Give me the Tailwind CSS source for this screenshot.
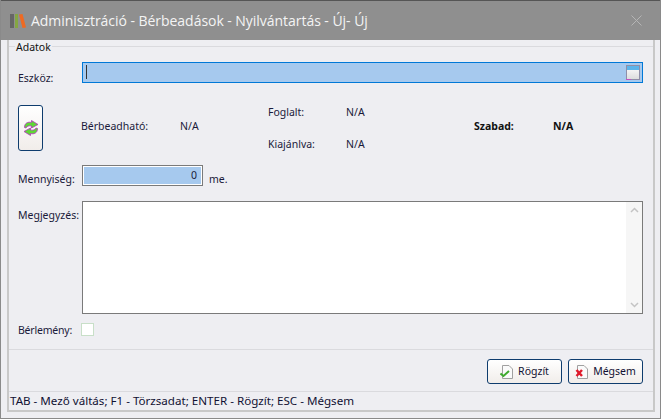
<!DOCTYPE html>
<html lang="hu">
<head>
    <meta charset="UTF-8">
    <title>Adminisztráció - Bérbeadások</title>
    <script src="https://cdn.jsdelivr.net/npm/@tailwindcss/browser@4"></script>
</head>
<body class="bg-[#eeeef2]">
    <div class="w-[661px] h-[419px] flex flex-col overflow-hidden bg-[#eeeef2] text-[#1a1a3a] text-[10.5px] font-['Noto_Sans',sans-serif] border-x border-b border-[#8a8a8a]">
        <!-- Title bar -->
        <header class="h-10 shrink-0 -mx-px bg-[#8f8f8f] border-t border-[#555555] flex items-center pl-[10px] pr-[19px]">
            <svg width="16" height="16" viewBox="0 0 16 16" class="mr-[5px]">
                <rect x="0" y="1" width="4" height="14" fill="#666666"/>
                <rect x="5" y="1" width="3" height="14" fill="#84a642"/>
                <path d="M9 1.500 L12.500 1 L16 14.500 L12.500 15 Z" fill="#ee6a22"/>
            </svg>
            <h1 class="text-[14px] tracking-[-0.04px] text-[#f4f4f4] font-['Open_Sans',sans-serif] whitespace-pre">Adminisztráció - Bérbeadások - Nyilvántartás - Új- Új</h1>
            <svg width="11" height="11" viewBox="0 0 11 11" class="ml-auto stroke-[#b5b5b5]" fill="none"><path d="M0.500 0.500 L10.500 10.500 M10.500 0.500 L0.500 10.500"/></svg>
        </header>

        <div class="flex-1 flex flex-col ml-[6px] mr-[5px] mb-[6px] border-x-2 border-b-2 border-[#c8c8c8]">
            <!-- Adatok group -->
            <section class="relative h-[304px] mt-[6px] border-t border-b border-[#dadade] pt-[15px] pl-[9px] pr-[10px]">
                <span class="absolute left-[6px] top-[-7px] bg-[#eeeef2] px-px text-[#111111] leading-[14px]">Adatok</span>

                <div class="flex items-center h-[20px]">
                    <label class="w-[64px] pt-[14px]">Eszköz:</label>
                    <div class="flex-1 h-[21px] bg-[#a6c9ee] border border-[#0078d7] flex items-center justify-between pl-[3px] pr-[2px]">
                        <span class="w-px h-[14px] bg-[#333333]"></span>
                        <svg width="14" height="15" viewBox="0 0 14 15">
                            <defs><linearGradient id="calBody" x1="0" y1="0" x2="0" y2="1"><stop offset="0" stop-color="#ffffff"/><stop offset="1" stop-color="#dcdcdc"/></linearGradient></defs>
                            <rect x="0.500" y="0.500" width="13" height="14" fill="url(#calBody)" stroke="#8f8fa8"/>
                            <rect x="1" y="1" width="12" height="4" fill="#5cb4ea"/>
                            <path d="M0 14.500 H5" stroke="#c24fc4"/>
                        </svg>
                    </div>
                </div>

                <div class="flex mt-[23px] h-[46px]">
                    <button class="w-[25px] h-[46px] rounded-[3px] border border-[#0e3c6e] bg-gradient-to-b from-[#ffffff] to-[#f1edea] flex items-center justify-center">
                        <svg width="16" height="16" viewBox="0 0 16 16">
                            <path d="M1.500 7.500 C1.500 3 5 1.500 8.500 2.500 L8.500 0.500 L15 4.500 L8.500 8 L8.500 6 C6 5.500 4 6 3 8 Z" fill="#5fd636" stroke="#b52fc0" stroke-width="0.800"/>
                            <path d="M14.500 8.500 C14.500 13 11 14.500 7.500 13.500 L7.500 15.500 L1 11.500 L7.500 8 L7.500 10 C10 10.500 12 10 13 8 Z" fill="#5fd636" stroke="#b52fc0" stroke-width="0.800"/>
                        </svg>
                    </button>
                    <div class="w-[38px]"></div>
                    <div class="flex items-center w-[99px] pb-[3px]">Bérbeadható:</div>
                    <div class="flex items-center w-[88px] pb-[3px]">N/A</div>
                    <div class="flex flex-col w-[78px] gap-[16px]">
                        <span>Foglalt:</span>
                        <span>Kiajánlva:</span>
                    </div>
                    <div class="flex flex-col w-[128px] gap-[16px]">
                        <span>N/A</span>
                        <span>N/A</span>
                    </div>
                    <div class="flex items-center w-[79px] pb-[3px] font-bold text-[#111111]">Szabad:</div>
                    <div class="flex items-center pb-[3px] font-bold text-[#111111]">N/A</div>
                </div>

                <div class="flex items-center mt-[14px] h-[21px]">
                    <label class="w-[64px] pt-[8px]">Mennyiség:</label>
                    <div class="w-[121px] h-[21px] bg-[#a6c9ee] border border-[#7a7a7a] ring-1 ring-inset ring-white flex items-center justify-end pr-[5px]">0</div>
                    <span class="ml-[6px] pt-[8px]">me.</span>
                </div>

                <div class="flex mt-[15px]">
                    <label class="w-[64px] pt-[7px]">Megjegyzés:</label>
                    <div class="flex-1 h-[113px] bg-white border border-[#7a7a7a] flex justify-end">
                        <div class="w-[16px] flex flex-col justify-between items-center py-[5px] bg-[#f6f6f6]">
                            <svg width="9" height="6" viewBox="0 0 9 6" fill="none" stroke="#c4c4c4" stroke-width="1.500"><path d="M1 5 L4.500 1.500 L8 5"/></svg>
                            <svg width="9" height="6" viewBox="0 0 9 6" fill="none" stroke="#c4c4c4" stroke-width="1.500"><path d="M1 1 L4.500 4.500 L8 1"/></svg>
                        </div>
                    </div>
                </div>

                <div class="flex items-center mt-[6px]">
                    <label class="w-[63px] pt-[3px] tracking-[-0.2px]">Bérlemény:</label>
                    <span class="w-[13px] h-[13px] bg-white border border-[#c8dfc8]"></span>
                </div>
            </section>

            <!-- Buttons -->
            <div class="flex-1 flex justify-end items-start gap-[6px] pt-[9px] pr-[10px] text-[#111133]">
                <button class="w-[75px] h-[25px] rounded-[3px] border border-[#0e3c6e] bg-gradient-to-b from-[#ffffff] to-[#f1edea] flex items-center justify-center gap-[4px]">
                    <svg width="14" height="14" viewBox="0 0 14 14">
                        <path d="M2.500 0.500 H9 L12.500 4 V13.500 H2.500 Z" fill="#fafafa" stroke="#a0a0a0"/>
                        <path d="M0.500 8.500 L3.500 11 L9 6" fill="none" stroke="#3eaa2e" stroke-width="2"/>
                    </svg>
                    Rögzít
                </button>
                <button class="w-[75px] h-[25px] rounded-[3px] border border-[#0e3c6e] bg-gradient-to-b from-[#ffffff] to-[#f1edea] flex items-center justify-center gap-[4px]">
                    <svg width="14" height="14" viewBox="0 0 14 14">
                        <path d="M2.500 0.500 H9 L12.500 4 V13.500 H2.500 Z" fill="#fafafa" stroke="#a0a0a0"/>
                        <path d="M1.500 5 L7 11 M7 5 L1.500 11" fill="none" stroke="#e01a2a" stroke-width="2.500"/>
                    </svg>
                    Mégsem
                </button>
            </div>

            <!-- Status bar -->
            <footer class="h-[19px] shrink-0 border-t border-[#dadade] flex items-center pl-[1px] text-[#111133] text-[11.600px]">TAB - Mező váltás; F1 - Törzsadat; ENTER - Rögzít; ESC - Mégsem</footer>
        </div>
    </div>
</body>
</html>
